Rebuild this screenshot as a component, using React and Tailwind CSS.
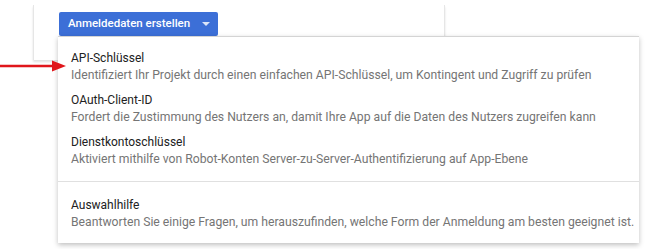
import React from "react";

const items = [
  ["API-Schlüssel", "Identifiziert Ihr Projekt durch einen einfachen API-Schlüssel, um Kontingent und Zugriff zu prüfen"],
  ["OAuth-Client-ID", "Fordert die Zustimmung des Nutzers an, damit Ihre App auf die Daten des Nutzers zugreifen kann"],
  ["Dienstkontoschlüssel", "Aktiviert mithilfe von Robot-Konten Server-zu-Server-Authentifizierung auf App-Ebene"],
];

function Item({ title, desc }) {
  return (
    <div className="flex flex-col px-[13px] whitespace-nowrap">
      <div className="text-[12px] leading-[17px] text-[#212121]">{title}</div>
      <div className="text-[12.2px] leading-[17px] text-[#757575]">{desc}</div>
    </div>
  );
}

export default function App() {
  return (
    <div className="relative w-[645px] h-[249px] bg-white overflow-hidden" style={{ fontFamily: "Roboto, 'Liberation Sans', sans-serif" }}>
      <div className="ml-[33px] mt-[5px] w-[412px] h-[55px] bg-white border-l border-r border-[#e6e6e6] shadow-[0_2px_2px_rgba(0,0,0,0.12)] pl-[25px] pt-[7px]">
        <button className="flex items-center gap-[12px] h-[24px] w-[159px] pl-[9px] rounded-[2px] bg-[#3c6fd7] text-white text-[11.5px] font-medium whitespace-nowrap">
          <span>Anmeldedaten erstellen</span>
          <svg width="8" height="4" viewBox="0 0 8 4"><path d="M0 0h8L4 4z" fill="#dbe5f8" /></svg>
        </button>
      </div>

      <div className="absolute left-[58px] top-[36px] w-[581px] h-[207px] bg-white border-t border-[#d4d4d4] shadow-[0_2px_5px_rgba(0,0,0,0.25)] pt-[13px]">
        <div className="flex flex-col gap-[8px]">
          {items.map(([t, d]) => <Item key={t} title={t} desc={d} />)}
        </div>
        <div className="mt-[13px] mb-[15px] h-px bg-[#e0e0e0]" />
        <Item title="Auswahlhilfe" desc="Beantworten Sie einige Fragen, um herauszufinden, welche Form der Anmeldung am besten geeignet ist." />
      </div>

      <svg className="absolute left-0 top-[60px]" width="68" height="12" viewBox="0 0 68 12">
        <line x1="0" y1="6" x2="54" y2="6" stroke="#e0161b" strokeWidth="2.4" />
        <path d="M52 0.5 L66 6 L52 11.5 Z" fill="#e0161b" />
      </svg>
    </div>
  );
}
